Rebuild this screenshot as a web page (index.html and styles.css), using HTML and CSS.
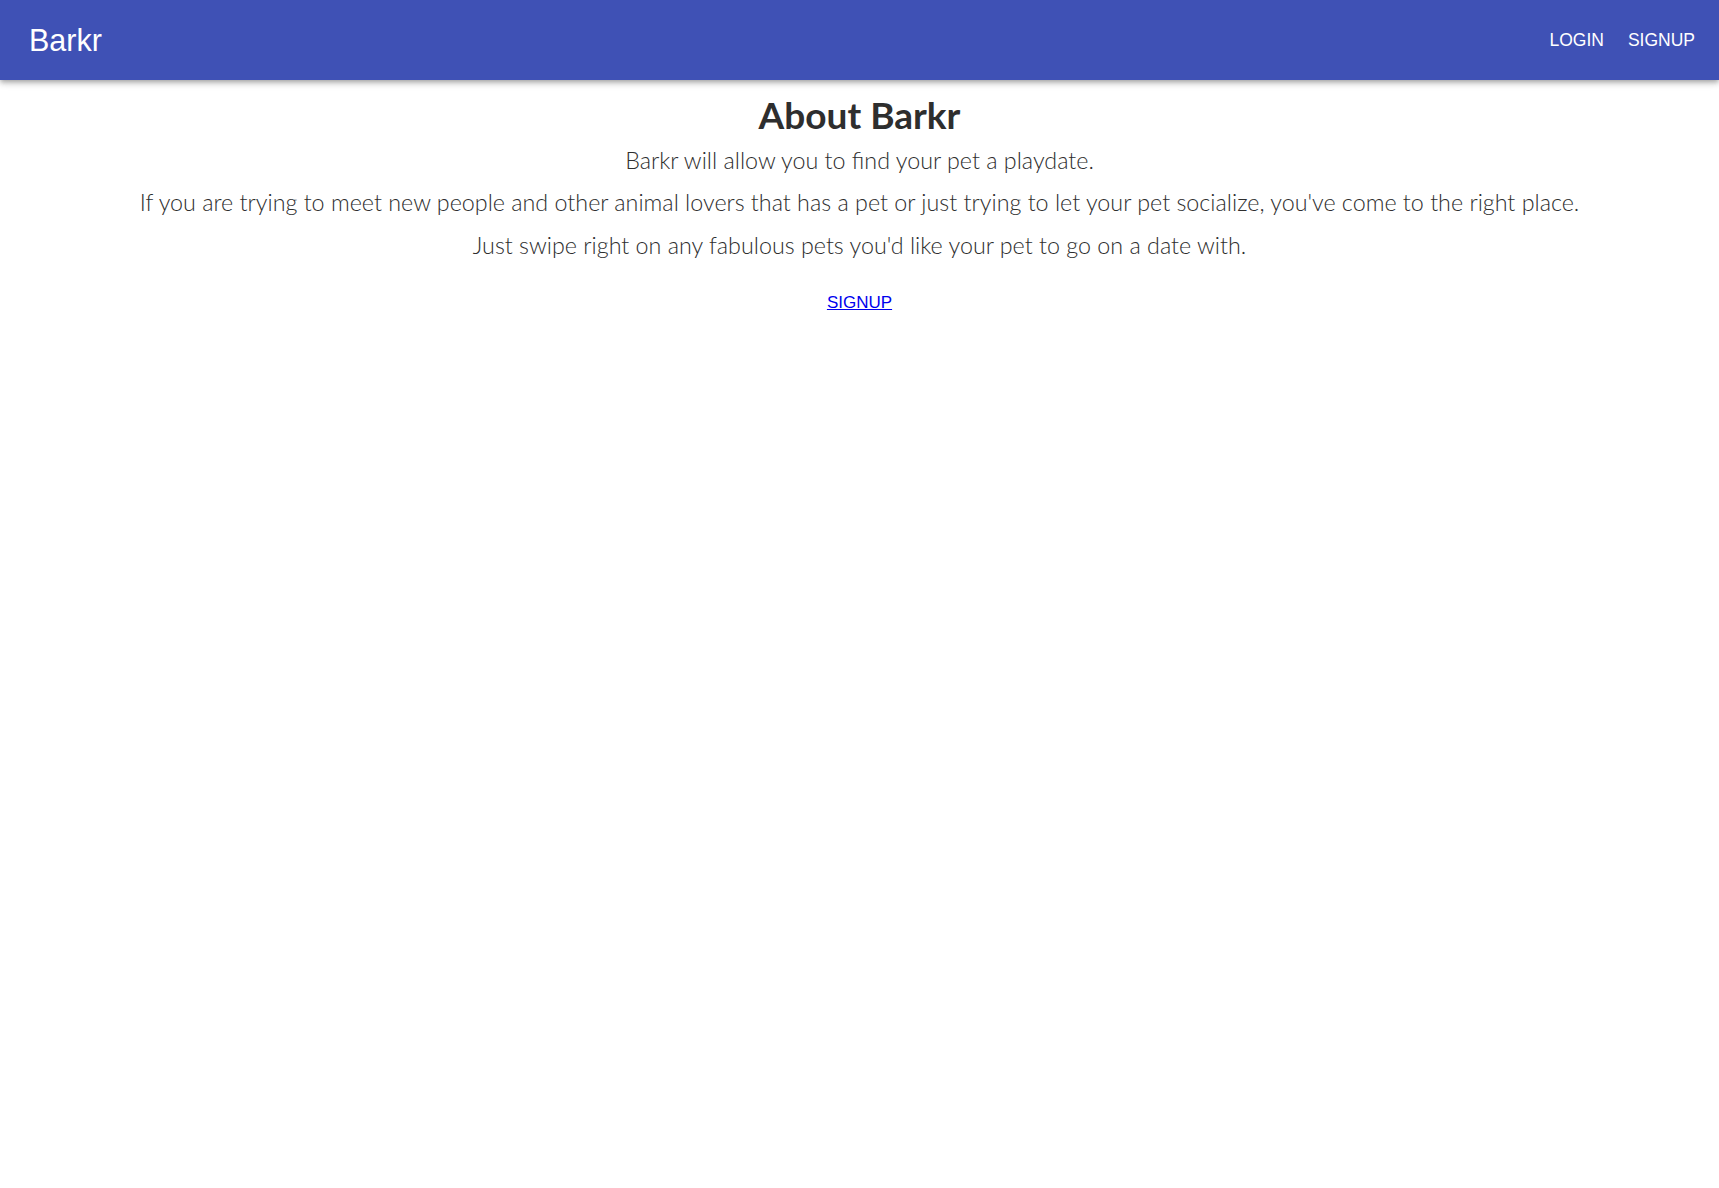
FILE: index.html
```html
<!DOCTYPE html>
<html lang="en">
<head>
<meta charset="utf-8">
<title>Barkr</title>
<link rel="stylesheet" href="styles.css">
</head>
<body>
<header class="appbar">
  <a class="brand" href="#">Barkr</a>
  <nav class="nav">
    <a class="nav-link" href="#">LOGIN</a>
    <a class="nav-link" href="#">SIGNUP</a>
  </nav>
</header>
<main class="about">
  <h1 class="title">About Barkr</h1>
  <p class="text">Barkr will allow you to find your pet a playdate.</p>
  <p class="text">If you are trying to meet new people and other animal lovers that has a pet or just trying to let your pet socialize, you've come to the right place.</p>
  <p class="text">Just swipe right on any fabulous pets you'd like your pet to go on a date with.</p>
  <div class="cta"><a class="cta-link" href="#">SIGNUP</a></div>
</main>
</body>
</html>
```
FILE: styles.css
```css
html, body {
  margin: 0;
  padding: 0;
  background: #ffffff;
}

body {
  font-family: "Liberation Sans", Arial, sans-serif;
}

.appbar {
  height: 80px;
  background: #3f51b5;
  display: flex;
  align-items: center;
  justify-content: space-between;
  padding: 0 24px 0 29px;
  box-shadow: 0 2px 4px -1px rgba(0,0,0,0.2), 0 4px 5px 0 rgba(0,0,0,0.14), 0 1px 10px 0 rgba(0,0,0,0.12);
  position: relative;
}

.brand {
  color: #ffffff;
  text-decoration: none;
  font-size: 30.5px;
  line-height: 1;
}

.nav {
  display: flex;
  gap: 24px;
}

.nav-link {
  color: #ffffff;
  text-decoration: none;
  font-size: 17.5px;
}

.about {
  text-align: center;
  padding-top: 10.5px;
  color: #2e2e2e;
}

.title {
  margin: 0;
  font-family: Lato, "Open Sans", sans-serif;
  font-weight: 700;
  font-size: 37px;
  line-height: 48px;
}

.text {
  margin: 0;
  font-family: Lato, "Open Sans", sans-serif;
  font-weight: 300;
  font-size: 23.3px;
  line-height: 42.8px;
}

.cta {
  margin-top: 24px;
  line-height: 24px;
}

.cta-link {
  color: #0000ee;
  font-size: 17px;
}
```
